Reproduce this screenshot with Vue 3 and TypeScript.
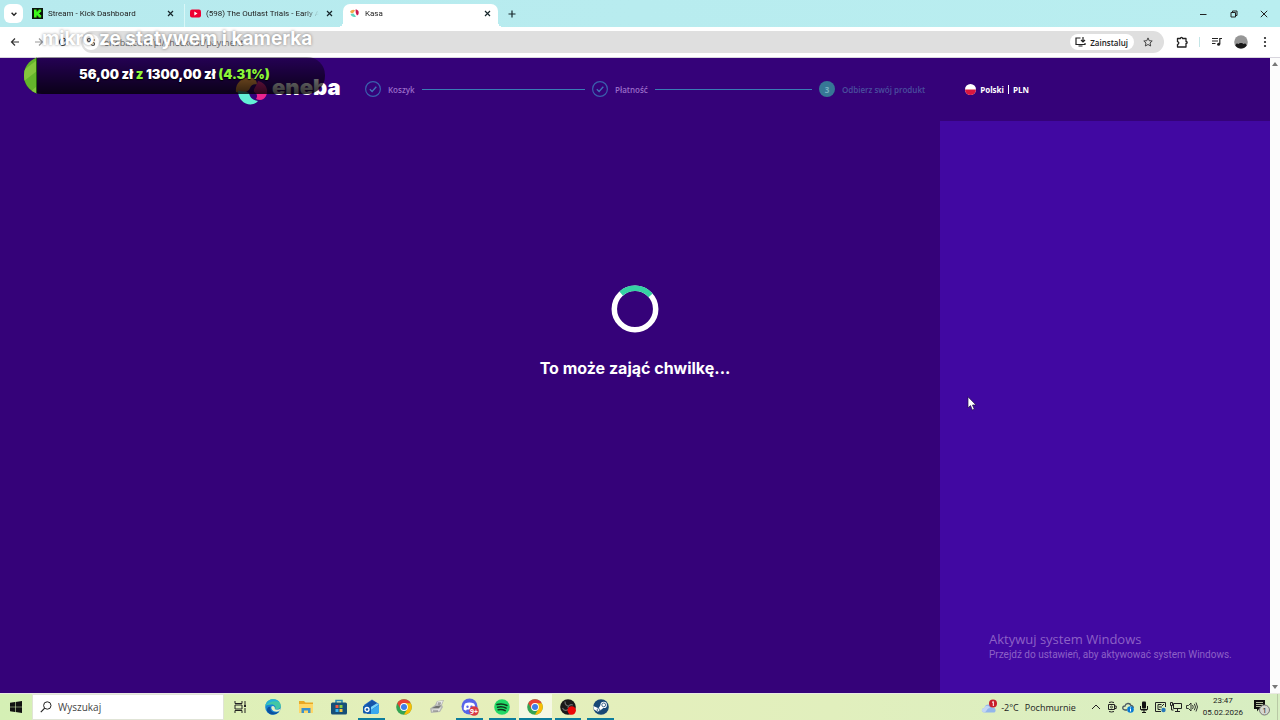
<script setup lang="ts">
import { ref } from 'vue'

interface Tab {
  id: string
  title: string
  active: boolean
}

interface Step {
  label: string
  state: 'done' | 'current'
}

interface App {
  id: string
  name: string
  running: boolean
  focused: boolean
}

const tabs: Tab[] = [
  { id: 'kick', title: 'Stream - Kick Dashboard', active: false },
  { id: 'youtube', title: '(598) The Outlast Trials - Early A', active: false },
  { id: 'eneba', title: 'Kasa', active: true },
]

const steps: Step[] = [
  { label: 'Koszyk', state: 'done' },
  { label: 'Płatność', state: 'done' },
  { label: 'Odbierz swój produkt', state: 'current' },
]

const apps: App[] = [
  { id: 'tasks', name: 'Widok zadań', running: false, focused: false },
  { id: 'edge', name: 'Microsoft Edge', running: false, focused: false },
  { id: 'files', name: 'Eksplorator plików', running: false, focused: false },
  { id: 'store', name: 'Microsoft Store', running: false, focused: false },
  { id: 'outlook', name: 'Outlook', running: true, focused: false },
  { id: 'chrome', name: 'Google Chrome', running: false, focused: false },
  { id: 'device', name: 'Urządzenia', running: false, focused: false },
  { id: 'discord', name: 'Discord', running: true, focused: false },
  { id: 'spotify', name: 'Spotify', running: true, focused: false },
  { id: 'chrome', name: 'Google Chrome – Kasa', running: true, focused: true },
  { id: 'obs', name: 'OBS Studio', running: true, focused: false },
  { id: 'steam', name: 'Steam', running: true, focused: false },
]

const raised = 56
const goal = 1300
const address = ref('eneba.com/pl/checkout/payment')
const query = ref('')
const money = (value: number) => value.toFixed(2).replace('.', ',') + ' zł'
const percent = ((raised / goal) * 100).toFixed(2)
</script>

<template>
  <div class="screen">
    <header class="tabbar">
      <button class="tab-search" aria-label="Wyszukaj karty">
        <svg width="8" height="8" viewBox="0 0 8 8"><path d="M1.6 2.8 4 5.2 6.4 2.8" fill="none" stroke="#222" stroke-width="1.4" /></svg>
      </button>
      <div v-for="tab in tabs" :key="tab.id" class="tab" :class="{ active: tab.active }">
        <svg v-if="tab.id === 'kick'" class="favicon" viewBox="0 0 11 11">
          <path d="M0 0h11v11H0z" fill="#0b130b" />
          <path d="M2 1.5h2.6v2h1V2.500h1V1.500h2.600v2.500h-1v1h-1v1h1v1h1v2.500H6.600v-1h-1v-1h-1v2H2z" fill="#3df51b" />
        </svg>
        <svg v-else-if="tab.id === 'youtube'" class="favicon" viewBox="0 0 11 11">
          <rect y="1.500" width="11" height="8" rx="2" fill="#ee0033" />
          <path d="M4.300 3.600v3.800L7.500 5.500z" fill="#fff" />
        </svg>
        <svg v-else class="favicon" viewBox="0 0 11 11">
          <path d="M1 4C2 1.500 5 1 6 2.600L4.600 4.600 3 5.500z" fill="#f3a84a" />
          <path d="M6.500 1.500C9.500 1.500 10.300 4 9.300 6.500L8 7.500 6.800 5z" fill="#c9184f" />
          <path d="M1.500 6 4.500 5.500l2.500 2.900C5.500 9.800 2.500 9 1.500 6z" fill="#63d8c2" />
        </svg>
        <span class="tab-title">{{ tab.title }}</span>
        <button class="icon-btn tab-close" aria-label="Zamknij kartę">
          <svg width="7" height="7" viewBox="0 0 7 7"><path d="m1 1 5 5M6 1 1 6" stroke="#17272b" stroke-width="1.200" /></svg>
        </button>
      </div>
      <button class="icon-btn new-tab" aria-label="Nowa karta">
        <svg width="8" height="8" viewBox="0 0 8 8"><path d="M4 .5v7M.5 4h7" stroke="#17272b" stroke-width="1.200" /></svg>
      </button>
      <div class="window-controls">
        <button class="icon-btn" aria-label="Minimalizuj">
          <svg width="8" height="8" viewBox="0 0 8 8"><path d="M1 4.500h6.500" stroke="#222" /></svg>
        </button>
        <button class="icon-btn" aria-label="Przywróć">
          <svg width="8" height="8" viewBox="0 0 8 8"><path d="M1 2.500h4.500V7H1zM2.500 2.500V1H7v4.500H5.500" fill="none" stroke="#222" /></svg>
        </button>
        <button class="icon-btn" aria-label="Zamknij">
          <svg width="8" height="8" viewBox="0 0 8 8"><path d="m.8.800 6.400 6.400M7.200.8.800 7.200" stroke="#222" /></svg>
        </button>
      </div>
    </header>

    <nav class="toolbar">
      <button class="icon-btn nav-btn" aria-label="Wstecz">
        <svg width="10" height="10" viewBox="0 0 10 10"><path d="M9 5H1.500M5 1.500 1.500 5 5 8.500" fill="none" stroke="#333" stroke-width="1.200" /></svg>
      </button>
      <button class="icon-btn nav-btn" aria-label="Dalej">
        <svg width="10" height="10" viewBox="0 0 10 10"><path d="M1 5h7.500M5 1.500 8.500 5 5 8.500" fill="none" stroke="#999" stroke-width="1.200" /></svg>
      </button>
      <button class="icon-btn nav-btn" aria-label="Odśwież">
        <svg width="10" height="10" viewBox="0 0 10 10"><path d="M8.500 5A3.500 3.500 0 1 1 7.500 2.500L8.500 3.500M8.600.8v3H5.800" fill="none" stroke="#444" stroke-width="1.200" /></svg>
      </button>
      <div class="omnibox">
        <span class="site-info">
          <svg width="10" height="10" viewBox="0 0 10 10"><path d="M5 3h4M1 7h4" stroke="#444" stroke-width="1.200" /><circle cx="3" cy="3" r="1.500" fill="none" stroke="#444" stroke-width="1.200" /><circle cx="7" cy="7" r="1.500" fill="none" stroke="#444" stroke-width="1.200" /></svg>
        </span>
        <input v-model="address" class="address" type="text" aria-label="Adres" />
        <button class="install">
          <svg width="11" height="10" viewBox="0 0 11 10"><path d="M5.500 1H1v6.500h9V6M3.500 9h4M8 0v4.500M6 3l2 2 2-2" fill="none" stroke="#222" stroke-width="1.200" /></svg>
          Zainstaluj
        </button>
        <button class="icon-btn star" aria-label="Dodaj do zakładek">
          <svg width="10" height="10" viewBox="0 0 10 10"><path d="m5 .9 1.200 2.800 3 .3L7 6l.700 3L5 7.500 2.300 9 3 6 .8 4l3-.3z" fill="none" stroke="#444" /></svg>
        </button>
      </div>
      <button class="icon-btn ext" aria-label="Rozszerzenia">
        <svg width="12" height="12" viewBox="0 0 12 12"><path d="M1.500 2.500h3c-.3-1.500 2.300-1.500 2 0h3.500v3c1.500-.3 1.500 2.300 0 2v3.500h-8.500V8.300c1.700 0 1.700-2.600 0-2.600z" fill="none" stroke="#222" stroke-width="1.300" stroke-linejoin="round" /></svg>
      </button>
      <span class="divider"></span>
      <button class="icon-btn media" aria-label="Multimedia">
        <svg width="12" height="10" viewBox="0 0 12 10"><path d="M1 1.500h6M1 4h6M1 6.500h3.500M8.800 7V1.500H11" fill="none" stroke="#222" stroke-width="1.200" /><circle cx="7.600" cy="7.300" r="1.500" fill="#222" /></svg>
      </button>
      <button class="icon-btn profile" aria-label="Profil">
        <svg width="14" height="14" viewBox="0 0 14 14"><circle cx="7" cy="7" r="6.800" fill="#969696" /><path d="M1.300 10.500C2 8 3.500 8 4.500 9c.5-1.500 4.500-1.500 5 0 1-1 2.500-1 3.200 1.500A6.800 6.800 0 0 1 1.300 10.500z" fill="#1a1a1a" /></svg>
      </button>
      <button class="icon-btn menu" aria-label="Menu">
        <svg width="4" height="12" viewBox="0 0 4 12"><g fill="#222"><circle cx="2" cy="2" r="1.100" /><circle cx="2" cy="6" r="1.100" /><circle cx="2" cy="10" r="1.100" /></g></svg>
      </button>
    </nav>

    <div class="viewport">
      <div class="page">
        <header class="checkout-header">
          <a class="logo" href="#" aria-label="eneba">
            <svg width="32" height="30" viewBox="0 0 32 30">
              <path d="M1 16C0 8 6 2 13 1.500c5-.5 9 2 9 7-3-1-6 .5-7 3.500-2 5-9 6-14 4z" fill="#f7a046" />
              <path d="M23 5c8 2 11 9 8 15-2 4-6 5-10 3 2-3 1-6-2-7-1-4 3-6 4-11z" fill="#e9258f" />
              <path d="M3 14.500c4 1.500 8 .5 11 2.500 1 5 4 7 9 8-6 7-20 3-20-10.500z" fill="#63f0d6" />
            </svg>
            <span>eneba</span>
          </a>
          <ol class="steps">
            <li v-for="(step, i) in steps" :key="step.label" class="step" :class="step.state">
              <svg v-if="step.state === 'done'" width="16" height="16" viewBox="0 0 16 16"><circle cx="8" cy="8" r="7.400" fill="none" stroke="#3a60ad" stroke-width="1.200" /><path d="m4.800 8.200 2.300 2.300 4.200-4.700" fill="none" stroke="#4172b8" stroke-width="1.300" /></svg>
              <span v-else class="step-number">{{ i + 1 }}</span>
              <span class="step-label">{{ step.label }}</span>
              <span v-if="i < steps.length - 1" class="step-line"></span>
            </li>
          </ol>
          <button class="locale">
            <svg width="11" height="11" viewBox="0 0 11 11"><circle cx="5.500" cy="5.500" r="5.500" fill="#fff" /><path d="M0 5.500h11a5.500 5.500 0 0 1-11 0z" fill="#d9173f" /></svg>
            <span>Polski</span><span class="locale-bar"></span><span>PLN</span>
          </button>
        </header>
        <main class="content">
          <aside class="summary"></aside>
          <section class="loader" role="status">
            <svg width="48" height="48" viewBox="0 0 48 48"><g fill="none" stroke-width="5.500"><circle cx="24" cy="24" r="20.700" stroke="#fff" /><path d="M10.200 8.600A20.700 20.700 0 0 1 39.600 10.400" stroke="#36d1a4" /></g></svg>
            <h1>To może zająć chwilkę...</h1>
          </section>
        </main>
      </div>
      <div class="scrollbar">
        <svg width="6" height="4" viewBox="0 0 6 4"><path d="M0 4 3 0l3 4z" fill="#777" /></svg>
        <svg width="6" height="4" viewBox="0 0 6 4"><path d="m0 0 3 4 3-4z" fill="#777" /></svg>
      </div>
    </div>

    <footer class="taskbar">
      <button class="icon-btn start" aria-label="Start">
        <svg width="12" height="12" viewBox="0 0 12 12"><path d="m0 1.700 5-.7v4.700H0zM5.600.900 12 0v5.700H5.600zM0 6.300h5V11l-5-.7zM5.600 6.300H12V12l-6.400-.9z" fill="#111" /></svg>
      </button>
      <label class="search">
        <svg width="12" height="12" viewBox="0 0 12 12"><circle cx="7.300" cy="4.500" r="3.700" fill="none" stroke="#222" /><path d="M4.700 7.200.8 11.200" stroke="#222" stroke-width="1.200" /></svg>
        <input v-model="query" type="text" placeholder="Wyszukaj" aria-label="Wyszukaj" />
      </label>
      <div class="apps">
        <button v-for="app in apps" :key="app.name" class="app" :class="{ running: app.running, focused: app.focused }" :aria-label="app.name">
          <svg v-if="app.id === 'tasks'" width="16" height="16" viewBox="0 0 16 16"><path d="M3 2v2.500h7V2M3 14v-2.500h7V14M3 6h7v4H3zM13 2v3M13 9v5" fill="none" stroke="#222" /><path d="M12 5.500h2v2.500h-2z" fill="#222" /></svg>
          <svg v-else-if="app.id === 'edge'" width="16" height="16" viewBox="0 0 16 16">
            <circle cx="8" cy="8" r="7.800" fill="#1685d3" />
            <path d="M.4 7C1 2.500 4.500.2 8 .2c5 0 8 3.400 7.800 6.800C15.500 10 12 11 9.800 10.200c1.800-2 .2-4.700-3.300-4.700C3.500 5.500 1 6.500.4 7z" fill="#43c7a4" />
            <path d="M.4 7C1 2.500 4.500.2 8 .2c3 0 5 1 6.500 3C10 1 4 2.500.4 7z" fill="#26b1d8" />
            <path d="M5.500 8c-1 4 3 7 8.500 4.500-2.500 4-9 4-11.500.5C1 10 3 7 5.500 8z" fill="#0b519f" />
            <path d="M6.500 7.500c1.500-1.500 4 0 3.300 2.700 1.500.8 3.700.6 5.700-.4l-1 2.200c-5 2-9-1-8-4.500z" fill="#e7efc4" />
          </svg>
          <svg v-else-if="app.id === 'files'" width="16" height="16" viewBox="0 0 16 16"><path d="M1 2h5l1.500 1.500H15V14H1z" fill="#e9a824" /><path d="M1 5h14v9H1z" fill="#ffd766" /><path d="M3.500 14V9h9v5H10v-2.500H6V14z" fill="#3c91cb" /></svg>
          <svg v-else-if="app.id === 'store'" width="16" height="16" viewBox="0 0 16 16"><path d="M5 4V1.500h6V4" fill="none" stroke="#2789b6" stroke-width="1.500" /><rect y="3.500" width="16" height="12" rx="1.500" fill="#174f78" /><path d="M4.500 6h3v3h-3z" fill="#ef5b42" /><path d="M8.500 6h3v3h-3z" fill="#8bcb45" /><path d="M4.500 10h3v3h-3z" fill="#3bb4ef" /><path d="M8.500 10h3v3h-3z" fill="#f8c83e" /></svg>
          <svg v-else-if="app.id === 'outlook'" width="16" height="16" viewBox="0 0 16 16"><path d="M1 6 9 .5 16 5v8.500L14.500 15H4z" fill="#2468c4" /><path d="M3 5.500 9 1.500l5 2.700-7 4.500z" fill="#1554a8" /><path d="m7 8.500 7-4.300L16 5.500 8 11z" fill="#79d5fa" /><path d="m16 6-8 5v4h6.500l1.500-1.500z" fill="#39a8ee" /><rect y="6.500" width="8" height="8" rx="1.500" fill="#0f59ad" /><circle cx="4" cy="10.500" r="2" fill="none" stroke="#fff" stroke-width="1.300" /></svg>
          <svg v-else-if="app.id === 'chrome'" width="16" height="16" viewBox="0 0 16 16">
            <circle cx="8" cy="8" r="7.800" fill="#34a353" />
            <path d="M1.200 4.200A7.800 7.800 0 0 1 14.800 4.200H8L4.700 9.900z" fill="#e94234" />
            <path d="M14.800 4.200A7.800 7.800 0 0 1 7.900 15.800L11.400 9.900 8 4.200z" fill="#fbbc05" />
            <circle cx="8" cy="8" r="3.900" fill="#fff" /><circle cx="8" cy="8" r="3" fill="#3e7ee8" />
          </svg>
          <svg v-else-if="app.id === 'device'" width="16" height="16" viewBox="0 0 16 16"><path d="M1 9.500 6 6l2-4 7-1-2 5 1 2-3 5-9 1z" fill="#b4b6b2" /><path d="m8.500 2.500 5.500-.7L12 6 7.500 6.500z" fill="#e9e9e9" /><path d="m3 9 4-2 5-.5-2 2.500z" fill="#707270" /><path d="m2.500 10.500 7-.5 3-2.500-2 4.500-7 .8z" fill="#dededc" /><path d="M4 12h5M9 4h3M8.500 5.200h3" stroke="#666" stroke-width=".8" /></svg>
          <svg v-else-if="app.id === 'discord'" width="18" height="18" viewBox="0 0 18 18"><circle cx="8.500" cy="8.500" r="8" fill="#5866e9" /><path d="M4 5.500c3-1.500 6-1.500 9 0 1.200 2 1.500 4 1.300 6l-2.300 1.200-.8-1.200H5.800L5 12.700l-2.300-1.200c0-2 .3-4 1.300-6z" fill="#fff" /><circle cx="6.500" cy="8.800" r="1.200" fill="#5866e9" /><circle cx="10.500" cy="8.800" r="1.200" fill="#5866e9" /><circle cx="13" cy="13" r="4.800" fill="#d83b45" /><text x="13" y="15.500" fill="#fff" font-size="7" font-weight="700" text-anchor="middle">9+</text></svg>
          <svg v-else-if="app.id === 'spotify'" width="16" height="16" viewBox="0 0 16 16"><circle cx="8" cy="8" r="7.800" fill="#22d865" /><path d="M3 5.500c3.500-1 7-.6 10 1M3.600 8.200c3-.8 6-.5 8.500 1M4.200 10.800c2.500-.6 5-.3 7 .9" fill="none" stroke="#11351c" stroke-width="1.500" stroke-linecap="round" /></svg>
          <svg v-else-if="app.id === 'obs'" width="16" height="16" viewBox="0 0 16 16"><circle cx="8" cy="8" r="7.800" fill="#191919" /><path d="M5 2.500c0 3 1.500 4.500 4 4.500M13 6c-3-1-5 1-5 3M2.500 9c1.500 3 4 3 6 1" fill="none" stroke="#6c6c6c" stroke-width="1.200" /><circle cx="11.700" cy="11.500" r="4.200" fill="#ee0707" /></svg>
          <svg v-else width="16" height="16" viewBox="0 0 16 16"><circle cx="8" cy="8" r="7.800" fill="#174875" /><path d="M.3 7 5.500 9.200 8 5.500l3 3-4.500 3.500-1.500 1L.8 10.300z" fill="#fff" /><circle cx="10.700" cy="5.900" r="3.200" fill="#fff" /><circle cx="10.700" cy="5.900" r="1.900" fill="none" stroke="#174875" stroke-width=".8" /><circle cx="5.500" cy="11" r="1.400" fill="none" stroke="#174875" stroke-width=".7" /></svg>
        </button>
      </div>
      <div class="tray">
        <button class="weather">
          <svg width="17" height="16" viewBox="0 0 17 16"><path d="M3.500 13.500C0 13.500 0 9 3.500 9 4 4.500 10 4.500 11 8.500c4-1 5 5 1.500 5z" fill="#92b6eb" /><path d="M3.500 13.500C0 13.500 0 9 3.500 9 4 6 8 6 9 9c-3 0-3 3-5.500 4.500z" fill="#c2d5f4" /><circle cx="12" cy="4.500" r="4" fill="#c81e2b" /><path d="m11 3.500 1.300-1v4.500" fill="none" stroke="#fff" /></svg>
          <span>-2°C</span><span class="condition">Pochmurnie</span>
        </button>
        <div class="tray-icons">
          <button class="icon-btn" aria-label="Ukryte ikony"><svg width="12" height="12" viewBox="0 0 12 12"><path d="M2 8l4-4 4 4" fill="none" stroke="#222" /></svg></button>
          <button class="icon-btn" aria-label="Kamera"><svg width="12" height="12" viewBox="0 0 12 12"><path d="M2.500 3.500h6v5h-6zM8.500 5h1.700v2.500H8.500M3 1.500q2.500-1 5 0M3 10.500q2.500 1 5 0" fill="none" stroke="#222" /><circle cx="5.500" cy="6" r="1" fill="none" stroke="#222" stroke-width=".8" /></svg></button>
          <button class="icon-btn" aria-label="OneDrive"><svg width="12" height="12" viewBox="0 0 12 12"><path d="M5 9H3C0 9 0 5 3 5c.5-3 5-3.500 6-.5C11 5 11.500 6 11 7" fill="none" stroke="#4c5960" stroke-width="1.300" /><circle cx="8.500" cy="8.500" r="3.300" fill="#087bd3" /><path d="M8.500 6.500v1M8.500 8v2.500" stroke="#fff" /></svg></button>
          <button class="icon-btn" aria-label="Mikrofon"><svg width="12" height="12" viewBox="0 0 12 12"><rect x="4" y=".5" width="4" height="7" rx="1" fill="#111" /><path d="M2.500 5v3.500h7V5M6 9v2.500M4 11.500h4" fill="none" stroke="#111" /><path d="M3 8h6v1.500H3z" fill="#111" /></svg></button>
          <button class="icon-btn" aria-label="Aktualizacja"><svg width="12" height="12" viewBox="0 0 12 12"><path d="M7 10.500H1.500v-9h10V6M7.500 3.500H4v5h2.500M5 6h3M8 5l2-2" fill="none" stroke="#222" /><circle cx="9.500" cy="9" r="2.200" fill="#2878b8" /></svg></button>
          <button class="icon-btn" aria-label="Sieć"><svg width="12" height="12" viewBox="0 0 12 12"><path d="M3.500 2.500h8v5h-8zM7.500 7.500v3M5 10.500h5M.5 1.500h2v3h-2zM1.500 4.500V9h2" fill="none" stroke="#222" /></svg></button>
          <button class="icon-btn" aria-label="Głośność"><svg width="12" height="12" viewBox="0 0 12 12"><path d="M.5 4.500h2L5 2v8L2.500 7.500h-2zM6.500 4q1.500 2 0 4M8.300 2.800q2.400 3.200 0 6.400M10 1.500q3 4.500 0 9" fill="none" stroke="#222" stroke-width=".9" /></svg></button>
        </div>
        <button class="clock"><span>23:47</span><span>05.02.2026</span></button>
        <button class="icon-btn notifications" aria-label="Powiadomienia">
          <svg width="18" height="18" viewBox="0 0 18 18"><path d="M1 2h11v9H6l-2 2.500V11H1z" fill="#111" /><path d="M3 4.500h7M3 6.500h7M3 8.500h5" stroke="#dcebc0" stroke-width=".8" /><circle cx="11.500" cy="12" r="5" fill="#d4d6cf" stroke="#777" /><text x="11.500" y="15" fill="#222" font-size="8" text-anchor="middle">1</text></svg>
        </button>
        <span class="show-desktop"></span>
      </div>
    </footer>

    <div class="goal">
      <div class="goal-title">mikro ze statywem i kamerka</div>
      <div class="goal-bar">
        <svg class="goal-fill" width="13" height="37" viewBox="0 0 13 37"><path d="M0 0h13v37H0z" fill="#64b52b" /><path d="m0 13 13-10v11L0 24zM4 37l9-8v8z" fill="#84c63d" /><path d="M12 0h1v37h-1z" fill="#26610d" /></svg>
        <p><span>{{ money(raised) }}</span> <em>z</em> <span>{{ money(goal) }}</span> <em>({{ percent }}%)</em></p>
      </div>
    </div>

    <div class="watermark">
      <p class="watermark-title">Aktywuj system Windows</p>
      <p>Przejdź do ustawień, aby aktywować system Windows.</p>
    </div>

    <svg class="cursor" width="10" height="15" viewBox="0 0 10 15"><path d="M1 .8v11l2.500-2.200L5.300 14l2-.8L5.500 9H9z" fill="#fff" stroke="#211047" stroke-width=".7" /></svg>
  </div>
</template>

<style>
body {
  margin: 0;
}
</style>

<style scoped>
.screen {
  position: relative;
  display: flex;
  flex-direction: column;
  min-height: 100vh;
  overflow: hidden;
  font-family: "Open Sans", "Noto Sans", sans-serif;
  font-size: 8px;
  color: #222;
}
.screen * {
  box-sizing: border-box;
}
button,
input {
  font: inherit;
  color: inherit;
}
button {
  padding: 0;
  border: 0;
  background: none;
  display: flex;
  align-items: center;
}
svg {
  display: block;
  flex: none;
}
p,
h1,
ol {
  margin: 0;
  padding: 0;
}
.icon-btn {
  justify-content: center;
  flex: none;
}
.tabbar {
  display: flex;
  height: 27px;
  padding: 4px 4px 0;
  background: linear-gradient(90deg, #b7eaee, #b9eef0);
}
.tab-search {
  width: 19px;
  height: 19px;
  margin-right: 4px;
  justify-content: center;
  border-radius: 6px;
  background: #fff;
}
.tab {
  position: relative;
  display: flex;
  align-items: center;
  width: 158px;
  height: 23px;
  padding: 0 10px 4px 5px;
  gap: 5px;
}
.tab:first-of-type {
  border-right: 1px solid #d9f7f7;
}
.tab.active {
  width: 155px;
  padding: 0 7px 4px 6px;
  background: #fff;
  border-radius: 7px 7px 0 0;
}
.tab.active::before,
.tab.active::after {
  content: "";
  position: absolute;
  bottom: 0;
  width: 5px;
  height: 5px;
}
.tab.active::before {
  right: 100%;
  background: radial-gradient(circle at 0 0, transparent 5px, #fff 5px);
}
.tab.active::after {
  left: 100%;
  background: radial-gradient(circle at 100% 0, transparent 5px, #fff 5px);
}
.favicon {
  width: 11px;
  height: 11px;
}
.tab-title {
  flex: 1;
  min-width: 0;
  font-family: Roboto, sans-serif;
  white-space: nowrap;
  line-height: 12px;
  mask-image: linear-gradient(90deg, #000 86%, transparent 98%);
}
.new-tab {
  width: 20px;
  height: 19px;
  margin-left: 4px;
}
.window-controls {
  display: flex;
  margin-left: auto;
  height: 19px;
}
.window-controls .icon-btn {
  width: 31px;
}
.window-controls .icon-btn:last-child {
  width: 24px;
  margin-left: 3px;
}
.toolbar {
  display: flex;
  align-items: center;
  height: 31px;
  padding: 0 10px 0 3px;
  background: #fff;
  border-bottom: 1px solid #d8d5dd;
}
.nav-btn {
  width: 24px;
  height: 24px;
}
.omnibox {
  display: flex;
  align-items: center;
  flex: 1;
  height: 22px;
  margin-left: 6px;
  padding: 0 6px 0 2px;
  border-radius: 11px;
  background: #dfdfdf;
}
.site-info {
  display: flex;
  align-items: center;
  justify-content: center;
  width: 16px;
  height: 16px;
  border-radius: 8px;
  background: #fff;
}
.address {
  flex: 1;
  min-width: 0;
  margin-left: 5px;
  padding: 0;
  border: 0;
  background: none;
  font-size: 9px;
  color: #666;
}
.install {
  gap: 4px;
  height: 16px;
  padding: 0 6px 0 5px;
  border-radius: 8px;
  background: #fff;
  font-weight: 600;
}
.star {
  width: 20px;
  height: 16px;
  margin-left: 4px;
}
.ext {
  width: 35px;
}
.divider {
  width: 1px;
  height: 10px;
  background: #c4e5e6;
}
.media,
.profile {
  margin-left: 11px;
}
.menu {
  width: 10px;
  margin-left: 12px;
}
.viewport {
  display: flex;
  flex: 1;
}
.page {
  display: flex;
  flex-direction: column;
  flex: 1;
  background: #350279;
}
.checkout-header {
  display: flex;
  align-items: center;
  height: 63px;
  width: 100%;
  max-width: 800px;
  margin: 0 auto;
  padding: 0 6px 1px 0;
}
.logo {
  display: flex;
  align-items: center;
  gap: 5px;
  width: 104px;
  margin-right: 26px;
  color: #fff;
  text-decoration: none;
  font-family: Inter, sans-serif;
  font-size: 22px;
  line-height: 22px;
  font-weight: 900;
}
.logo svg {
  margin-top: 4px;
}
.logo span {
  padding-bottom: 4px;
}
.steps {
  display: flex;
  flex: 1;
  gap: 7px;
  list-style: none;
}
.step {
  display: flex;
  align-items: center;
  flex: 1 1 0;
  white-space: nowrap;
  color: #9a6cc8;
  font-weight: 600;
}
.step.current {
  flex: none;
  color: #4a4f9e;
}
.step-label {
  margin-left: 7px;
}
.step-line {
  flex: 1;
  height: 1px;
  margin-left: 7px;
  background: #397db4;
}
.step-number {
  display: flex;
  align-items: center;
  justify-content: center;
  width: 16px;
  height: 16px;
  border-radius: 8px;
  background: #367795;
  color: #76b0c3;
  font-weight: 700;
}
.locale {
  margin-left: 40px;
  gap: 4px;
  color: #fff;
  font-weight: 700;
}
.locale-bar {
  width: 1px;
  height: 9px;
  background: #fff;
}
.content {
  display: grid;
  grid-template-columns: 940fr 330fr;
  flex: 1;
}
.summary {
  grid-area: 1 / 2;
  background: #4108a2;
}
.loader {
  grid-area: 1 / 1 / 2 / 3;
  display: flex;
  flex-direction: column;
  align-items: center;
  gap: 23px;
  padding-top: 164px;
}
.loader h1 {
  font-family: Inter, "Open Sans", sans-serif;
  font-size: 16px;
  line-height: 24px;
  font-weight: 700;
  color: #fff;
}
.scrollbar {
  display: flex;
  flex-direction: column;
  justify-content: space-between;
  align-items: center;
  width: 10px;
  padding: 4px 0;
  background: #fcfcfc;
}
.taskbar {
  display: flex;
  align-items: stretch;
  height: 27px;
  background: linear-gradient(90deg, #d5f0b5, #e6efbb 35%, #e1efbd 65%, #d7eec2);
  border-top: 1px solid #e9e9e2;
}
.start {
  width: 32px;
}
.search {
  display: flex;
  align-items: center;
  gap: 6px;
  width: 192px;
  padding-left: 7px;
  background: #fff;
  border: 1px solid #e0e4d6;
}
.search input {
  flex: 1;
  min-width: 0;
  padding: 0;
  border: 0;
  outline: 0;
  background: none;
  font-size: 10px;
}
.search input::placeholder {
  color: #444;
  opacity: 1;
}
.apps {
  display: flex;
  width: 393px;
}
.app {
  position: relative;
  flex: 1;
  justify-content: center;
}
.app.focused {
  background: #f5f8e4;
}
.app.running::after {
  content: "";
  position: absolute;
  left: 3px;
  right: 3px;
  bottom: 0;
  height: 2px;
  background: #0d7d9d;
}
.app.focused::after {
  left: 0;
  right: 0;
}
.tray {
  display: flex;
  align-items: center;
  margin-left: auto;
  font-size: 9px;
}
.weather {
  gap: 6px;
  margin-right: 14px;
}
.weather svg {
  margin-right: -3px;
}
.tray-icons {
  display: flex;
  gap: 4px;
}
.clock {
  flex-direction: column;
  margin-left: 5px;
  font-family: Roboto, sans-serif;
  font-size: 8px;
  line-height: 12px;
}
.notifications {
  margin-left: 10px;
}
.show-desktop {
  align-self: stretch;
  width: 3px;
  margin-left: 6px;
  border-left: 1px solid #b9c9a5;
}
.goal {
  position: absolute;
  left: 24px;
  top: 27px;
  width: 301px;
  font-family: Inter, sans-serif;
  color: #fff;
}
.goal-title {
  padding-left: 18px;
  height: 30px;
  font-size: 19px;
  line-height: 24px;
  font-weight: 700;
  white-space: nowrap;
  text-shadow: 0 0 3px rgba(0, 0, 0, 0.45);
}
.goal-bar {
  display: flex;
  align-items: center;
  height: 37px;
  overflow: hidden;
  border-radius: 18px;
  background: linear-gradient(rgba(0, 0, 0, 0.3), rgba(0, 0, 0, 0.8));
}
.goal-bar p {
  margin-left: 42px;
  padding-bottom: 3px;
  font-size: 13px;
  line-height: 20px;
  font-weight: 900;
  white-space: nowrap;
  text-shadow: 0 1px 1px #000;
}
.goal-bar em {
  font-style: normal;
  color: #8df53a;
}
.watermark {
  position: absolute;
  right: 52px;
  bottom: 59px;
  width: 239px;
  color: #8d61c6;
  font-family: Roboto, sans-serif;
  font-size: 10px;
  line-height: 13px;
  white-space: nowrap;
}
.watermark-title {
  font-family: "Open Sans", sans-serif;
  font-size: 13px;
  line-height: 18px;
}
.cursor {
  position: absolute;
  left: 967px;
  top: 396px;
}
</style>
